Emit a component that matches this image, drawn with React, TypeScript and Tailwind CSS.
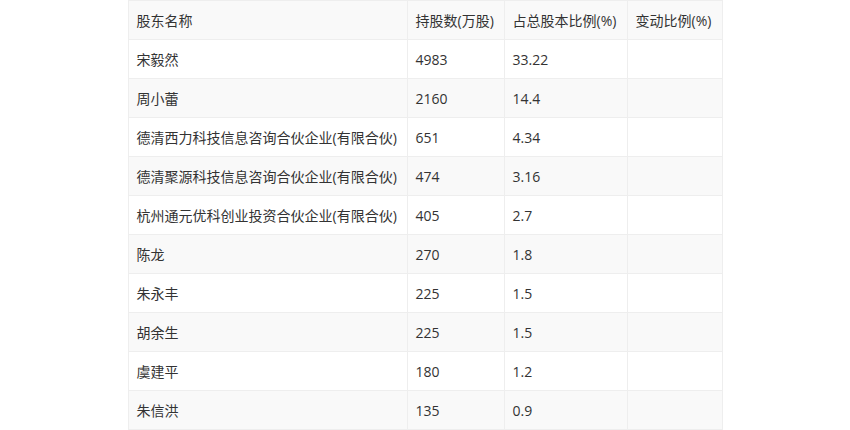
const ROWS: [string, string, string, string][] = [
  ["宋毅然", "4983", "33.22", ""],
  ["周小蕾", "2160", "14.4", ""],
  ["德清西力科技信息咨询合伙企业(有限合伙)", "651", "4.34", ""],
  ["德清聚源科技信息咨询合伙企业(有限合伙)", "474", "3.16", ""],
  ["杭州通元优科创业投资合伙企业(有限合伙)", "405", "2.7", ""],
  ["陈龙", "270", "1.8", ""],
  ["朱永丰", "225", "1.5", ""],
  ["胡余生", "225", "1.5", ""],
  ["虞建平", "180", "1.2", ""],
  ["朱信洪", "135", "0.9", ""],
];

const HEAD = ["股东名称", "持股数(万股)", "占总股本比例(%)", "变动比例(%)"];

const cell = "h-[39px] border border-[#eeeeee] px-[8px] text-left align-middle font-normal whitespace-nowrap";

export default function App() {
  return (
    <div
      className="flex h-[430px] w-[850px] justify-center bg-white text-[14px] text-[#333333]"
      style={{ fontFamily: '"Open Sans", "Noto Sans CJK SC", sans-serif' }}
    >
      <table className="h-fit table-fixed border-collapse">
        <colgroup>
          <col className="w-[279px]" />
          <col className="w-[97px]" />
          <col className="w-[123px]" />
          <col className="w-[95px]" />
        </colgroup>
        <thead>
          <tr className="bg-[#f9f9f9]">
            {HEAD.map((h) => (
              <th key={h} className={cell}>
                {h}
              </th>
            ))}
          </tr>
        </thead>
        <tbody>
          {ROWS.map((r, i) => (
            <tr key={r[0]} className={i % 2 === 1 ? "bg-[#f9f9f9]" : "bg-white"}>
              {r.map((v, j) => (
                <td key={j} className={cell}>
                  {v}
                </td>
              ))}
            </tr>
          ))}
        </tbody>
      </table>
    </div>
  );
}
